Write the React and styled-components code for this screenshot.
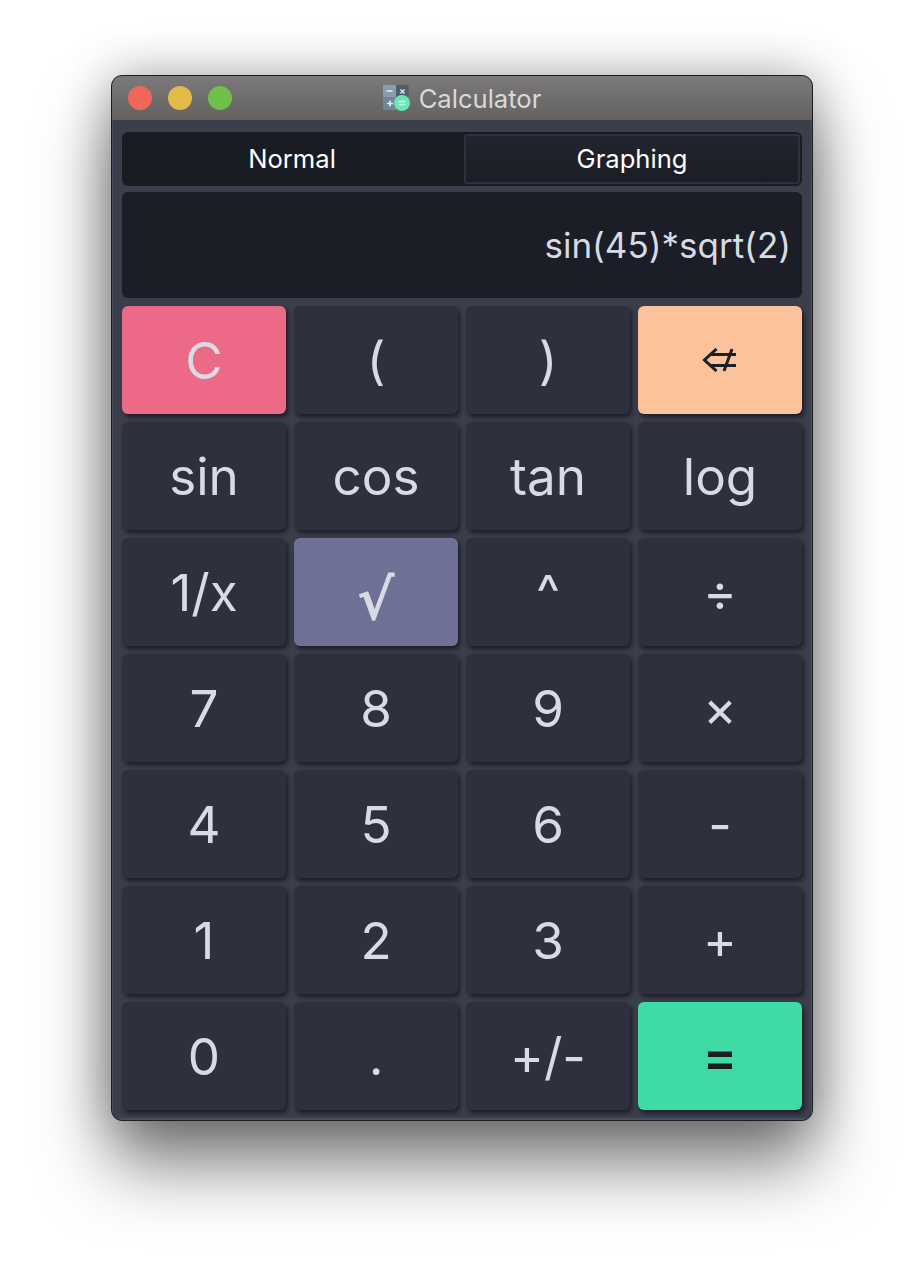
import React from "react";
import styled, { createGlobalStyle } from "styled-components";

const GlobalStyle = createGlobalStyle`
  html, body {
    margin: 0;
    padding: 0;
    background: #fff;
    font-family: "Inter", "Liberation Sans", sans-serif;
  }
`;

const Page = styled.div`
  width: 924px;
  height: 1268px;
  padding: 75px 0 0 111px;
  box-sizing: border-box;
  overflow: hidden;
`;

const Window = styled.div`
  width: 702px;
  height: 1046px;
  box-sizing: border-box;
  border-radius: 11px;
  overflow: hidden;
  background: #3b3e4b;
  border: 1px solid #1d1d20;
  box-shadow: 0 44px 70px rgba(0, 0, 0, 0.5), 0 0 50px rgba(0, 0, 0, 0.3);
`;

const TitleBar = styled.div`
  height: 44px;
  position: relative;
  display: flex;
  align-items: center;
  justify-content: center;
  gap: 8px;
  background: linear-gradient(#7b7979, #636261);
  color: #d9d9d9;
  font-size: 25.6px;
`;

const Lights = styled.div`
  position: absolute;
  left: 16px;
  top: 10px;
  display: flex;
  gap: 16px;
`;

const Light = styled.span`
  width: 24px;
  height: 24px;
  border-radius: 50%;
  background: ${p => p.color};
`;

const Content = styled.div`
  height: 1000px;
  box-sizing: border-box;
  padding: 12px 9px 0;
  display: flex;
  flex-direction: column;
  border: solid #4b4e5b;
  border-width: 0 1px 2px;
`;

const Tabs = styled.div`
  display: grid;
  grid-template-columns: 340px 1fr;
  height: 54px;
  box-sizing: border-box;
  background: #1a1c23;
  border-radius: 6px;
  padding: 2px 2px 2px 0;
  margin-bottom: 6px;
`;

const Tab = styled.div`
  display: flex;
  align-items: center;
  justify-content: center;
  color: #fff;
  font-size: 25.6px;
  box-sizing: border-box;
  padding-bottom: 2px;
  margin-left: ${p => (p.$boxed ? "2px" : "0")};
  border-radius: 3px;
  border: ${p => (p.$boxed ? "2px solid #2e303e" : "none")};
  background: ${p => (p.$boxed ? "linear-gradient(#22242e, #1c1e26)" : "transparent")};
`;

const Display = styled.div`
  height: 106px;
  box-sizing: border-box;
  background: #1c1e27;
  border-radius: 6px;
  color: #d8dbe3;
  font-size: 35px;
  display: flex;
  align-items: center;
  justify-content: flex-end;
  padding: 0 11px;
  margin-bottom: 8px;
`;

const Keypad = styled.div`
  display: grid;
  grid-template-columns: repeat(4, 164px);
  grid-auto-rows: 108px;
  gap: 8px;
`;

const Key = styled.div`
  display: flex;
  align-items: center;
  justify-content: center;
  border-radius: 6px;
  font-size: 51.2px;
  font-weight: ${p => p.$weight || 400};
  color: ${p => p.$ink || "#d8dbe3"};
  background: ${p => p.$bg || "#2e303e"};
  box-shadow: 2px 3px 4px rgba(17, 18, 26, 0.75);
`;

const RootGlyph = styled.span`
  font-family: "DejaVu Sans", sans-serif;
  font-size: 56px;
  margin-top: 14px;
  -webkit-text-stroke: 1.6px #d8dbe3;
`;

function CalcIcon() {
  return (
    <svg width="28" height="28" viewBox="0 0 28 28">
      <rect x="0" y="1" width="13" height="12.5" fill="#8a9cab" />
      <rect x="13" y="1" width="12.5" height="12.5" fill="#4d5f6a" />
      <rect x="0" y="13.5" width="13" height="12.5" fill="#6f8696" />
      <rect x="13" y="13.5" width="12.5" height="12.5" fill="#4d5f6a" />
      <path d="M3.5 7h6M4 19.5h6M7 16.5v6" stroke="#e6edf0" strokeWidth="1.6" />
      <path d="M17.5 5.5l4 4M21.5 5.5l-4 4" stroke="#dfe6ea" strokeWidth="1.5" />
      <circle cx="19" cy="19" r="8" fill="#65e8b8" />
      <path d="M15.5 17.5h7M15.5 20.5h7" stroke="#d6f8ea" strokeWidth="1.4" />
    </svg>
  );
}

function BackIcon() {
  return (
    <svg width="36" height="24" viewBox="0 0 36 24" fill="none" stroke="#1d1f28" strokeWidth="3">
      <path d="M14.5 1L2.5 12l12 11" />
      <path d="M8 6.5h26M8 17.5h26" />
      <path d="M30 1l-8 22" />
    </svg>
  );
}

const ROWS = [
  [{ t: "C", $bg: "#ec6a87" }, { t: "(" }, { t: ")" }, { t: <BackIcon />, $bg: "#fbc29b" }],
  [{ t: "sin" }, { t: "cos" }, { t: "tan" }, { t: "log" }],
  [{ t: "1/x" }, { t: <RootGlyph>√</RootGlyph>, $bg: "#6e7096" }, { t: "^" }, { t: "÷" }],
  [{ t: "7" }, { t: "8" }, { t: "9" }, { t: "×" }],
  [{ t: "4" }, { t: "5" }, { t: "6" }, { t: "-" }],
  [{ t: "1" }, { t: "2" }, { t: "3" }, { t: "+" }],
  [{ t: "0" }, { t: "." }, { t: "+/-" }, { t: "=", $bg: "#3fdba4", $ink: "#1b1d25", $weight: 600 }],
];

export default function App() {
  return (
    <Page>
      <GlobalStyle />
      <Window>
        <TitleBar>
          <Lights>
            <Light color="#f2665a" />
            <Light color="#e3bb47" />
            <Light color="#6fbf4a" />
          </Lights>
          <CalcIcon />
          <span>Calculator</span>
        </TitleBar>
        <Content>
          <Tabs>
            <Tab>Normal</Tab>
            <Tab $boxed>Graphing</Tab>
          </Tabs>
          <Display>sin(45)*sqrt(2)</Display>
          <Keypad>
            {ROWS.flat().map((k, i) => (
              <Key key={i} $bg={k.$bg} $ink={k.$ink} $weight={k.$weight}>{k.t}</Key>
            ))}
          </Keypad>
        </Content>
      </Window>
    </Page>
  );
}
